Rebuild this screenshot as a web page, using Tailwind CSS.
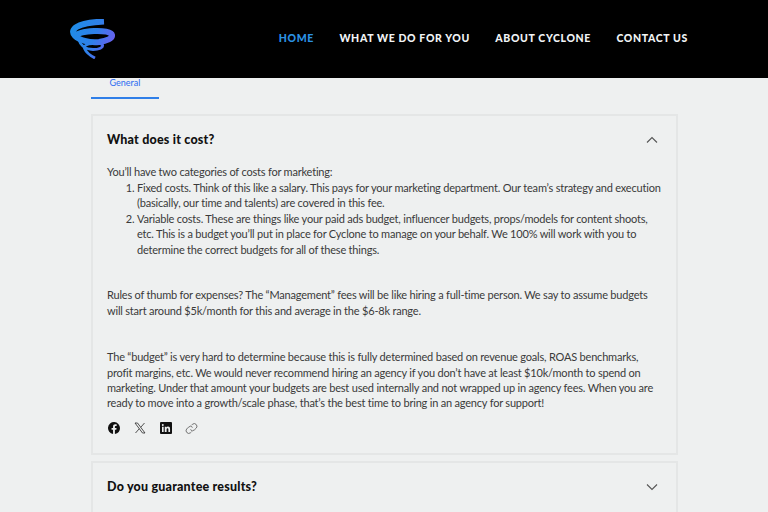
<!DOCTYPE html>
<html><head><meta charset="utf-8"><script src="https://cdn.jsdelivr.net/npm/@tailwindcss/browser@4"></script></head>
<body class="bg-[#eef0f0] font-['Lato',sans-serif] h-[512px] overflow-hidden">
<header class="h-[78px] bg-black flex items-center justify-between pl-[69px] pr-[80px]">
<svg width="46" height="40" viewBox="0 0 46 40" fill="none">
<defs><linearGradient id="g" x1="0" y1="0" x2="46" y2="20" gradientUnits="userSpaceOnUse"><stop offset="0" stop-color="#1c8fe6"/><stop offset="0.6" stop-color="#2f80ea"/><stop offset="1" stop-color="#6a5fee"/></linearGradient></defs>
<path d="M35 2.500C24 3 13 4.500 7.500 8C3.500 10.500 3 14 6 17C10 21 20 24 30 23C38 22 43.500 19.500 43 16C42.500 13 34 11.500 25 12C16 12.500 9 14 8 16" stroke="url(#g)" stroke-width="6"/>
<path d="M10 21C11 25 15 30 24 30.500C30 30.500 34.500 28.500 33.500 26C32.500 24 25 24 20 25C16 26 15 27.500 15.500 29.500C17 33 20 36 26 39" stroke="url(#g)" stroke-width="2.800"/>
</svg>
<nav class="flex items-center gap-[25.4px] text-[10.5px] font-black text-[#f1f4f6] tracking-[0.64px] pb-[1px]">
<a class="text-[#2b92e4]">HOME</a><a>WHAT WE DO FOR YOU</a><a>ABOUT CYCLONE</a><a>CONTACT US</a>
</nav>
</header>
<main class="w-[587px] ml-[91px]">
<div class="w-[68px] h-[21px] border-b-2 border-[#2f7fe8] text-center text-[9px] leading-[11px] text-[#2b6cf0]"><span class="relative top-[-1px]">General</span></div>
<section class="mt-[15px] h-[341px] border-2 border-[#e4e6e6] px-[14px]">
<div class="h-[48px] flex items-center justify-between">
<h2 class="text-[12.5px] font-black text-[#111] tracking-[0.2px]">What does it cost?</h2>
<svg width="12" height="8" viewBox="0 0 12 8" fill="none" class="mr-[4px]"><path d="M1 6.500L6 1.500L11 6.500" stroke="#555" stroke-width="1.100"/></svg>
</div>
<div class="text-[11px] leading-[15.4px] text-[#3a3a3a] tracking-[-0.2px]">
<p>You’ll have two categories of costs for marketing:</p>
<ol class="list-decimal pl-[30px] pt-[0.5px]">
<li>Fixed costs. Think of this like a salary. This pays for your marketing department. Our team’s strategy and execution (basically, our time and talents) are covered in this fee.</li>
<li>Variable costs. These are things like your paid ads budget, influencer budgets, props/models for content shoots, etc. This is a budget you’ll put in place for Cyclone to manage on your behalf. We 100% will work with you to determine the correct budgets for all of these things.</li>
</ol>
<p class="mt-[30.5px]">Rules of thumb for expenses? The “Management” fees will be like hiring a full-time person. We say to assume budgets will start around $5k/month for this and average in the $6-8k range.</p>
<p class="mt-[31px]">The “budget” is very hard to determine because this is fully determined based on revenue goals, ROAS benchmarks, profit margins, etc. We would never recommend hiring an agency if you don’t have at least $10k/month to spend on marketing. Under that amount your budgets are best used internally and not wrapped up in agency fees. When you are ready to move into a growth/scale phase, that’s the best time to bring in an agency for support!</p>
</div>
<div class="mt-[11px] flex items-center gap-[14px] pl-[1px]">
<svg width="12" height="12" viewBox="0 0 24 24" fill="#111"><path d="M24 12a12 12 0 1 0-13.900 11.900v-8.400H7.100V12h3V9.400c0-3 1.800-4.700 4.500-4.700 1.300 0 2.700.2 2.700.2v3h-1.500c-1.500 0-2 .9-2 1.900V12h3.300l-.5 3.500h-2.800v8.400A12 12 0 0 0 24 12z"/></svg>
<svg width="12" height="12" viewBox="0 0 24 24" fill="none" stroke="#333" stroke-width="1.700"><path d="M2 2h5l15 20h-5zM21 2L13.500 10.500M10.500 13.500L3 22"/></svg>
<svg width="12" height="12" viewBox="0 0 24 24"><rect width="24" height="24" rx="2" fill="#111"/><path d="M4 9.500h3.300V20H4zM5.600 4a1.900 1.900 0 1 1 0 3.900 1.900 1.900 0 0 1 0-3.900zM9.500 9.500h3.200V11c.5-.9 1.600-1.800 3.300-1.800 3.500 0 4.100 2.300 4.100 5.300V20h-3.300v-4.900c0-1.200 0-2.700-1.700-2.700s-1.900 1.300-1.900 2.600V20H9.500z" fill="#eef0f0"/></svg>
<svg width="13" height="13" viewBox="0 0 24 24" fill="none" stroke="#666" stroke-width="1.700" class="ml-[-1px]"><path d="M10 14a5 5 0 0 0 7.500.5l3.500-3.500a5 5 0 0 0-7-7l-2 2"/><path d="M14 10a5 5 0 0 0-7.500-.5L3 13a5 5 0 0 0 7 7l2-2"/></svg>
</div>
</section>
<section class="mt-[6px] h-[80px] border-2 border-[#e4e6e6] px-[14px]">
<div class="h-[48px] flex items-center justify-between">
<h2 class="text-[12.5px] font-black text-[#111] tracking-[0.2px]">Do you guarantee results?</h2>
<svg width="12" height="8" viewBox="0 0 12 8" fill="none" class="mr-[4px]"><path d="M1 1.500L6 6.500L11 1.500" stroke="#555" stroke-width="1.100"/></svg>
</div>
</section>
</main>
</body></html>
